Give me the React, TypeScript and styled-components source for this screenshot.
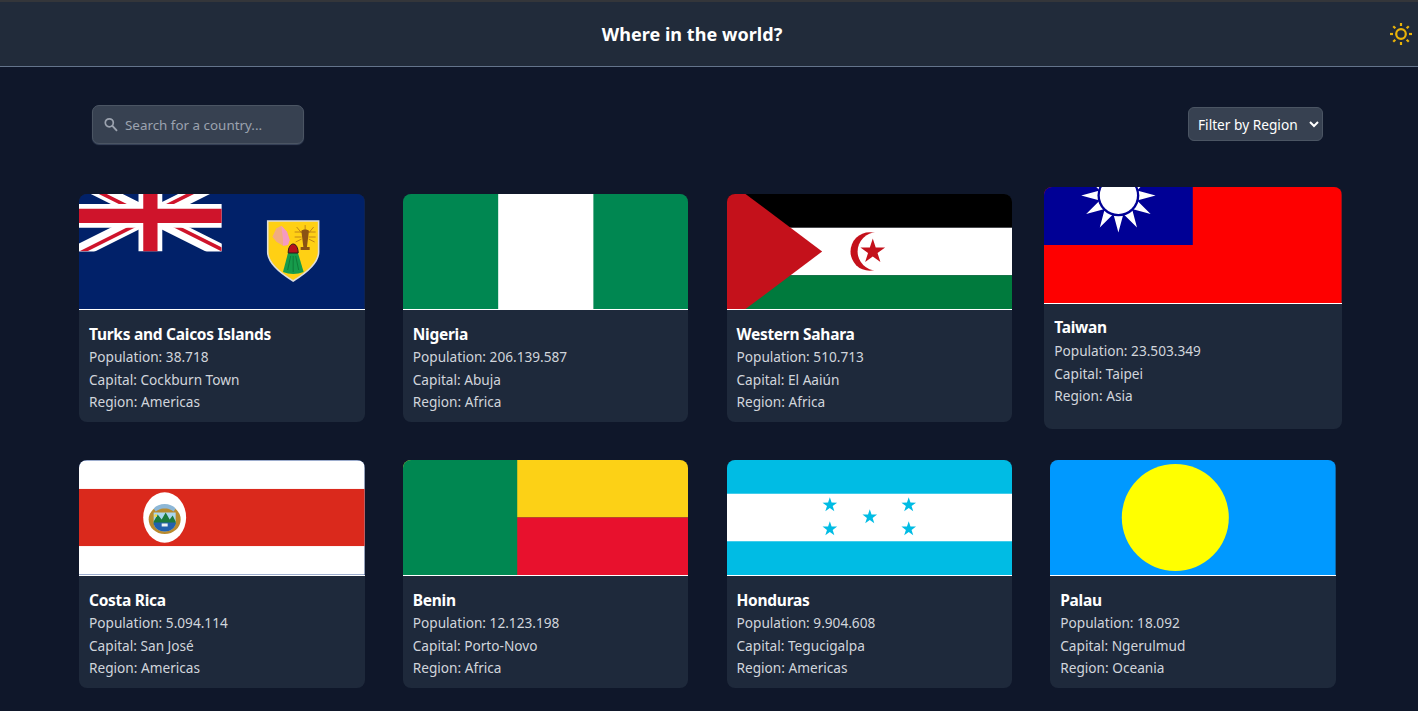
import React from "react";
import styled, { createGlobalStyle } from "styled-components";

const Global = createGlobalStyle`
  html, body { margin: 0; padding: 0; background: #0f172a; }
  * { box-sizing: border-box; }
  body { font-family: "Noto Sans", "Open Sans", Arial, sans-serif; color: #fff; }
`;

const Page = styled.div`
  min-height: 100vh;
  background: #0f172a;
`;
const Header = styled.header`
  height: 67px;
  display: flex;
  align-items: center;
  padding-right: 5px;
  background: #212b3a;
  border-top: 2px solid #34363a;
  border-bottom: 1px solid #64748b;
`;
const Title = styled.h1`
  flex: 1;
  margin: 0;
  padding-right: 5px;
  text-align: center;
  font-size: 18px;
  letter-spacing: 0.05px;
  font-weight: 700;
  color: #fff;
`;
const ThemeButton = styled.span`
  display: flex;
  color: #eab308;
`;
const Controls = styled.div`
  display: flex;
  align-items: center;
  justify-content: space-between;
  padding: 38px 95px 0 92px;
`;
const SearchBox = styled.label`
  width: 212px;
  height: 39px;
  display: flex;
  align-items: center;
  gap: 7px;
  padding: 0 10px 0 11px;
  background: #374151;
  border: 1px solid #4b5563;
  border-radius: 7px;
  box-shadow: 0 1px 1px rgba(100, 116, 139, 0.5);
  color: #9ca3af;
`;
const SearchInput = styled.input`
  flex: 1;
  min-width: 0;
  padding: 0;
  border: 0;
  outline: 0;
  background: transparent;
  color: #fff;
  font: 13.4px "Noto Sans", sans-serif;
  &::placeholder { color: #9ca3af; opacity: 1; }
`;
const RegionSelect = styled.select`
  width: 135px;
  height: 34px;
  margin-bottom: 1px;
  padding: 0 2px 0 5px;
  background: #374151;
  border: 1px solid #4b5563;
  border-radius: 6px;
  color: #fff;
  font: 13.7px "Noto Sans", sans-serif;
`;
const Grid = styled.main`
  display: grid;
  grid-template-columns: repeat(4, 1fr);
  gap: 38px 38.2px;
  padding: 50px 82.2px 23px 79px;
`;
const Card = styled.article<{ $raised?: boolean }>`
  margin: ${(p) => (p.$raised ? "-7px -6px" : "0")};
  background: #1e293b;
  border-radius: 8px;
  overflow: hidden;
`;
const FlagFrame = styled.div<{ $raised?: boolean }>`
  height: ${(p) => (p.$raised ? "117px" : "116px")};
  border-bottom: 1px solid #fff;
  overflow: hidden;
`;
const FlagSvg = styled.svg`
  display: block;
  width: 100%;
  height: 100%;
`;
const CardBody = styled.div<{ $raised?: boolean }>`
  padding: ${(p) => (p.$raised ? "12px" : "13px")} 10px 8.4px;
  line-height: 22.4px;
`;
const CountryName = styled.h2<{ $raised?: boolean }>`
  margin: 0 0 ${(p) => (p.$raised ? "2px" : "1px")};
  font-size: 15.5px;
  letter-spacing: -0.27px;
  line-height: 22.4px;
  font-weight: 700;
  color: #fff;
`;
const Fact = styled.p`
  margin: 0;
  font-size: 13.65px;
  color: #d1d5db;
`;

const starPoints = (cx: number, cy: number, R: number, r: number, n = 5) =>
  Array.from({ length: n * 2 }, (_, i) => {
    const a = (Math.PI * i) / n - Math.PI / 2;
    const d = i % 2 ? r : R;
    return `${(cx + d * Math.cos(a)).toFixed(2)},${(cy + d * Math.sin(a)).toFixed(2)}`;
  }).join(" ");

const SunIcon = () => {
  const rays = [0, 45, 90, 135, 180, 225, 270, 315];
  return (
    <svg width="24" height="24" viewBox="0 0 24 24" fill="none" stroke="currentColor" strokeWidth="2.2">
      <circle cx="12" cy="12" r="4.800" />
      {rays.map((a) => (
        <line key={a} x1="12" y1="4" x2="12" y2="1" transform={`rotate(${a} 12 12)`} />
      ))}
    </svg>
  );
};

const SearchIcon = () => (
  <svg width="14" height="15" viewBox="0 0 14 15" fill="none" stroke="currentColor" strokeWidth="1.7">
    <circle cx="5.300" cy="5.800" r="4" />
    <path d="M8.200 8.700 L13 13.800" strokeWidth="1.900" />
  </svg>
);

const Flag = ({ w, h, children }: { w: number; h: number; children: React.ReactNode }) => (
  <FlagSvg viewBox={`0 0 ${w} ${h}`} preserveAspectRatio="xMidYMid slice">
    {children}
  </FlagSvg>
);

const Turks = () => (
  <Flag w={286} h={143}>
    <rect width="286" height="143" fill="#012169" />
    <svg x="0" y="0" width="143" height="71.5" viewBox="0 0 60 30">
      <clipPath id="tc-t">
        <path d="M30,15 h30 v15 z v15 h-30 z h-30 v-15 z v-15 h30 z" />
      </clipPath>
      <path d="M0,0 L60,30 M60,0 L0,30" stroke="#fff" strokeWidth="6" />
      <path d="M0,0 L60,30 M60,0 L0,30" clipPath="url(#tc-t)" stroke="#cf142b" strokeWidth="3" />
      <path d="M30,0 v30 M0,15 h60" stroke="#fff" strokeWidth="10" />
      <path d="M30,0 v30 M0,15 h60" stroke="#cf142b" strokeWidth="6" />
    </svg>
    <path d="M189 41 H240 V72 C240 84 226 94 214.500 101 C203 94 189 84 189 72Z" fill="#ffd014" stroke="#dcdcdc" strokeWidth="1.600" />
    <path d="M193.700 56.700 L197.700 48.300 L202.700 45.700 L208.300 51.700 L211 60 L209.300 65 L204.300 65.700 L197.700 61.700Z" fill="#f2ab80" />
    <path d="M202.700 45.700 L208.300 51.700 L211 60 L209.300 65 L204.300 65.700 C205 58 203 52 202.700 45.700Z" fill="#f59ac0" />
    <path d="M226.500 45 V50 M218 47 L223 53 M235 47 L230 53 M216 52 H223 M237 52 H230 M216 57 H223 M237 57 H230 M217 62 L223 59 M236 62 L230 59" stroke="#a5651a" strokeWidth="0.700" />
    <path d="M222.700 51 C223.500 49 229.500 49 230.300 51 L228.300 67 H231 V70 H222 V67 H224.700Z" fill="#8a5214" />
    <path d="M209.300 73 L204.300 92 Q214.500 96 225 92 L219.300 73Z" fill="#169b4b" />
    <path d="M209 90 L212 76 M214.500 92 V76 M220 90 L217 76" stroke="#0c6a30" strokeWidth="0.700" />
    <path d="M209.500 73 C209.500 61 219.500 61 219.500 73Z" fill="#b5121b" stroke="#2a1a1a" strokeWidth="1" />
  </Flag>
);
const Nigeria = () => (
  <Flag w={3} h={1.5}>
    <rect width="3" height="1.5" fill="#008751" />
    <rect x="1" width="1" height="1.5" fill="#fff" />
  </Flag>
);
const Sahara = () => (
  <Flag w={286} h={143}>
    <rect width="286" height="47.7" fill="#000" />
    <rect y="47.7" width="286" height="47.6" fill="#fff" />
    <rect y="95.300" width="286" height="47.7" fill="#007a3d" />
    <polygon points="0,0 95.300,71.500 0,143" fill="#c4111b" />
    <circle cx="143" cy="71.500" r="19.300" fill="#c4111b" />
    <circle cx="150" cy="71.500" r="19.200" fill="#fff" />
    <polygon points={starPoints(146, 71.5, 13, 5)} fill="#c4111b" />
  </Flag>
);
const Taiwan = () => (
  <Flag w={300} h={200}>
    <rect width="300" height="200" fill="#fe0000" />
    <rect width="150" height="100" fill="#000095" />
    <polygon points={starPoints(75, 50, 37.5, 19.5, 12)} fill="#fff" />
    <circle cx="75" cy="50" r="21.100" fill="#000095" />
    <circle cx="75" cy="50" r="18.750" fill="#fff" />
  </Flag>
);
const CostaRica = () => (
  <Flag w={500} h={300}>
    <rect width="500" height="300" fill="#002b7f" />
    <rect y="50" width="500" height="200" fill="#fff" />
    <rect y="100" width="500" height="100" fill="#da291c" />
    <ellipse cx="150" cy="150" rx="37.600" ry="44" fill="#fff" />
    <g transform="translate(150 150) scale(1.75)">
      <ellipse cx="0" cy="2" rx="16" ry="14.500" fill="#b98a2e" />
      <path d="M-11 -5 H11 V5 C11 11 5 14 0 14 C-5 14 -11 11 -11 5Z" fill="#a9d6ee" />
      <path d="M-11 4 L-7 -3 L-3 2 L1 -5 L5 2 L8 -2 L11 4 V7 H-11Z" fill="#1c7a3c" />
      <path d="M-11 5 H11 C11 11 5 14 0 14 C-5 14 -11 11 -11 5Z" fill="#2361ad" />
      <rect x="-3" y="6" width="6" height="3" fill="#eef2f2" />
      <path d="M-11 -9 C-6 -15 6 -15 11 -9 L9 -6 C4 -10 -4 -10 -9 -6Z" fill="#8db7d6" />
      <circle cx="-9" cy="-2" r="1.500" fill="#f5d94a" />
    </g>
  </Flag>
);
const Benin = () => (
  <Flag w={15} h={10}>
    <rect width="15" height="5" fill="#fcd116" />
    <rect y="5" width="15" height="5" fill="#e8112d" />
    <rect width="6" height="10" fill="#008751" />
  </Flag>
);
const Honduras = () => (
  <Flag w={286} h={143}>
    <rect width="286" height="143" fill="#00bce4" />
    <rect y="47.700" width="286" height="47.600" fill="#fff" />
    {[
      [103, 59],
      [182, 59],
      [143, 71],
      [103, 83],
      [182, 83],
    ].map(([x, y]) => (
      <polygon key={`${x}-${y}`} points={starPoints(x, y, 7.7, 3)} fill="#00bce4" />
    ))}
  </Flag>
);
const Palau = () => (
  <Flag w={286} h={178.750}>
    <rect width="286" height="178.750" fill="#0099ff" />
    <circle cx="125.500" cy="89.375" r="53.600" fill="#ffff00" />
  </Flag>
);

type Country = {
  name: string;
  population: string;
  capital: string;
  region: string;
  flag: React.ComponentType;
  raised?: boolean;
};

const countries: Country[] = [
  { name: "Turks and Caicos Islands", population: "38.718", capital: "Cockburn Town", region: "Americas", flag: Turks },
  { name: "Nigeria", population: "206.139.587", capital: "Abuja", region: "Africa", flag: Nigeria },
  { name: "Western Sahara", population: "510.713", capital: "El Aaiún", region: "Africa", flag: Sahara },
  { name: "Taiwan", population: "23.503.349", capital: "Taipei", region: "Asia", flag: Taiwan, raised: true },
  { name: "Costa Rica", population: "5.094.114", capital: "San José", region: "Americas", flag: CostaRica },
  { name: "Benin", population: "12.123.198", capital: "Porto-Novo", region: "Africa", flag: Benin },
  { name: "Honduras", population: "9.904.608", capital: "Tegucigalpa", region: "Americas", flag: Honduras },
  { name: "Palau", population: "18.092", capital: "Ngerulmud", region: "Oceania", flag: Palau },
];

export default function App() {
  return (
    <Page>
      <Global />
      <Header>
        <Title>Where in the world?</Title>
        <ThemeButton>
          <SunIcon />
        </ThemeButton>
      </Header>
      <Controls>
        <SearchBox>
          <SearchIcon />
          <SearchInput placeholder="Search for a country..." />
        </SearchBox>
        <RegionSelect defaultValue="">
          <option value="">Filter by Region</option>
          <option>Africa</option>
          <option>Americas</option>
          <option>Asia</option>
          <option>Europe</option>
          <option>Oceania</option>
        </RegionSelect>
      </Controls>
      <Grid>
        {countries.map(({ flag: FlagArt, ...c }) => (
          <Card key={c.name} $raised={c.raised}>
            <FlagFrame $raised={c.raised}>
              <FlagArt />
            </FlagFrame>
            <CardBody $raised={c.raised}>
              <CountryName $raised={c.raised}>{c.name}</CountryName>
              <Fact>Population: {c.population}</Fact>
              <Fact>Capital: {c.capital}</Fact>
              <Fact>Region: {c.region}</Fact>
            </CardBody>
          </Card>
        ))}
      </Grid>
    </Page>
  );
}
